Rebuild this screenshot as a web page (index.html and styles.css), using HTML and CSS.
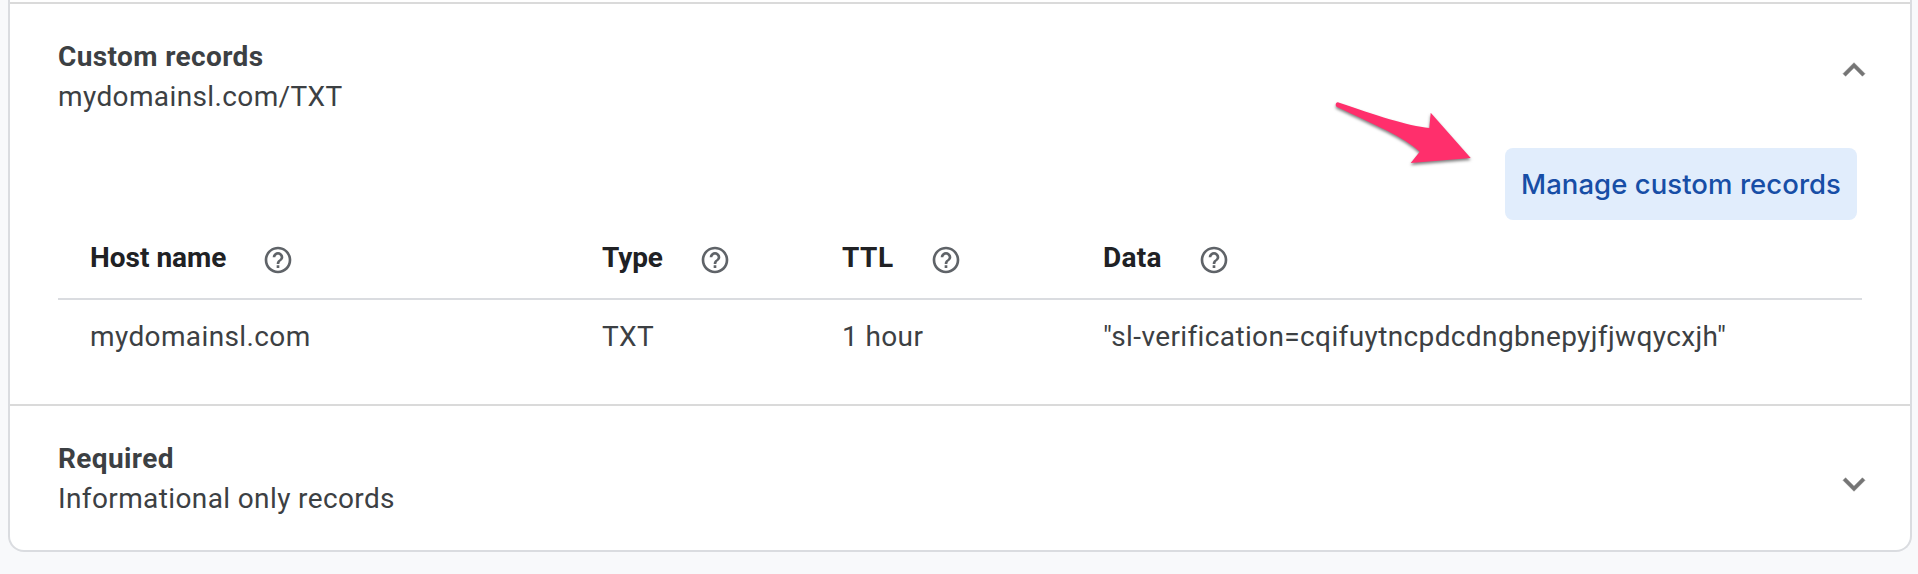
FILE: index.html
```html
<!DOCTYPE html>
<html lang="en">
<head>
<meta charset="utf-8">
<title>Custom records</title>
<link rel="stylesheet" href="styles.css">
</head>
<body>
<svg class="defs" width="0" height="0" aria-hidden="true">
  <symbol id="help" viewBox="0 0 24 24"><path d="M11 18h2v-2h-2v2zm1-16C6.480 2 2 6.480 2 12s4.480 10 10 10 10-4.480 10-10S17.520 2 12 2zm0 18c-4.410 0-8-3.590-8-8s3.590-8 8-8 8 3.590 8 8-3.590 8-8 8zm0-14c-2.210 0-4 1.790-4 4h2c0-1.100.9-2 2-2s2 .9 2 2c0 2-3 1.750-3 5h2c0-2.250 3-2.500 3-5 0-2.210-1.790-4-4-4z"/></symbol>
</svg>
<main class="card">
  <section class="panel panel-open">
    <header class="panel-head">
      <div>
        <h2 class="title">Custom records</h2>
        <p class="subtitle">mydomainsl.com/TXT</p>
      </div>
      <svg class="chevron" viewBox="0 0 24 24"><path d="M12 8l-6 6 1.410 1.410L12 10.830l4.590 4.580L18 14z"/></svg>
    </header>
    <div class="actions">
      <button class="manage" type="button"><span>Manage custom records</span></button>
    </div>
    <div class="table">
      <div class="row head">
        <div class="cell">Host name<svg class="help"><use href="#help"/></svg></div>
        <div class="cell type">Type<svg class="help"><use href="#help"/></svg></div>
        <div class="cell ttl">TTL<svg class="help"><use href="#help"/></svg></div>
        <div class="cell data">Data<svg class="help"><use href="#help"/></svg></div>
      </div>
      <div class="row body">
        <div class="cell">mydomainsl.com</div>
        <div class="cell">TXT</div>
        <div class="cell">1 hour</div>
        <div class="cell">"sl-verification=cqifuytncpdcdngbnepyjfjwqycxjh"</div>
      </div>
    </div>
  </section>
  <section class="panel panel-closed">
    <header class="panel-head">
      <div>
        <h2 class="title">Required</h2>
        <p class="subtitle">Informational only records</p>
      </div>
      <svg class="chevron" viewBox="0 0 24 24"><path d="M16.590 8.590L12 13.170 7.410 8.590 6 10l6 6 6-6z"/></svg>
    </header>
  </section>
</main>
<svg class="arrow" viewBox="0 0 150 80"><path d="M8.500 12.500C45 25 78 36 99.300 38L100.700 22.700L140.700 68L80.700 73L89.700 61.700C74 47 45 35 7 17C4.500 15.500 6 11.500 8.500 12.500Z"/></svg>
</body>
</html>
```
FILE: styles.css
```css
* { box-sizing: border-box; }
body {
  margin: 0;
  height: 574px;
  overflow: hidden;
  position: relative;
  background: #f8f9fb;
  color: #3c4043;
  font: 400 28px/40px Roboto, "Liberation Sans", sans-serif;
  letter-spacing: 0.38px;
}
.defs { position: absolute; }
.card {
  width: 1904px;
  height: 552px;
  margin-left: 8px;
  background: #fff;
  border: 2px solid #dadce0;
  border-top: 0;
  border-radius: 0 0 16px 16px;
  padding-top: 2px;
}
.panel { border-top: 2px solid #dadada; }
.panel-open { height: 402px; }
.panel-head {
  display: flex;
  justify-content: space-between;
  padding: 33px 34px 0 48px;
}
.title, .subtitle { margin: 0; font-size: 28px; line-height: 40px; }
.title { font-weight: 700; }
.chevron {
  width: 44px;
  height: 44px;
  margin-top: 11px;
  fill: #757575;
  stroke: #757575;
  stroke-width: 0.25;
}
.panel-closed .chevron { margin-top: 23px; }
.actions {
  display: flex;
  justify-content: flex-end;
  padding: 31px 53px 0 0;
}
.manage {
  width: 352px;
  height: 72px;
  padding: 0;
  border: 0;
  border-radius: 8px;
  background: #e1edfc;
  color: #174ea6;
  font: 500 27.5px/40px Inter, Roboto, sans-serif;
  letter-spacing: 0.06px;
  white-space: nowrap;
}
.table { margin: 0 48px; }
.row {
  display: grid;
  grid-template-columns: 512px 240px 261px 1fr;
  padding-left: 32px;
}
.cell { display: flex; align-items: center; white-space: nowrap; }
.head {
  height: 80px;
  padding-bottom: 2px;
  border-bottom: 2px solid #dadce0;
  color: #202124;
  font-weight: 700;
  letter-spacing: 0;
}
.type { letter-spacing: -0.1px; }
.ttl { letter-spacing: 0.5px; }
.data { letter-spacing: 0.25px; }
.body { height: 72px; padding-top: 2px; }
.help {
  width: 32px;
  height: 32px;
  margin: 4px 0 0 36px;
  fill: #5f6368;
}
.arrow {
  position: absolute;
  left: 1330px;
  top: 90px;
  width: 150px;
  height: 80px;
  fill: #ff2f6c;
  filter: drop-shadow(0 2px 1.5px rgba(0, 0, 0, 0.5));
}
```
